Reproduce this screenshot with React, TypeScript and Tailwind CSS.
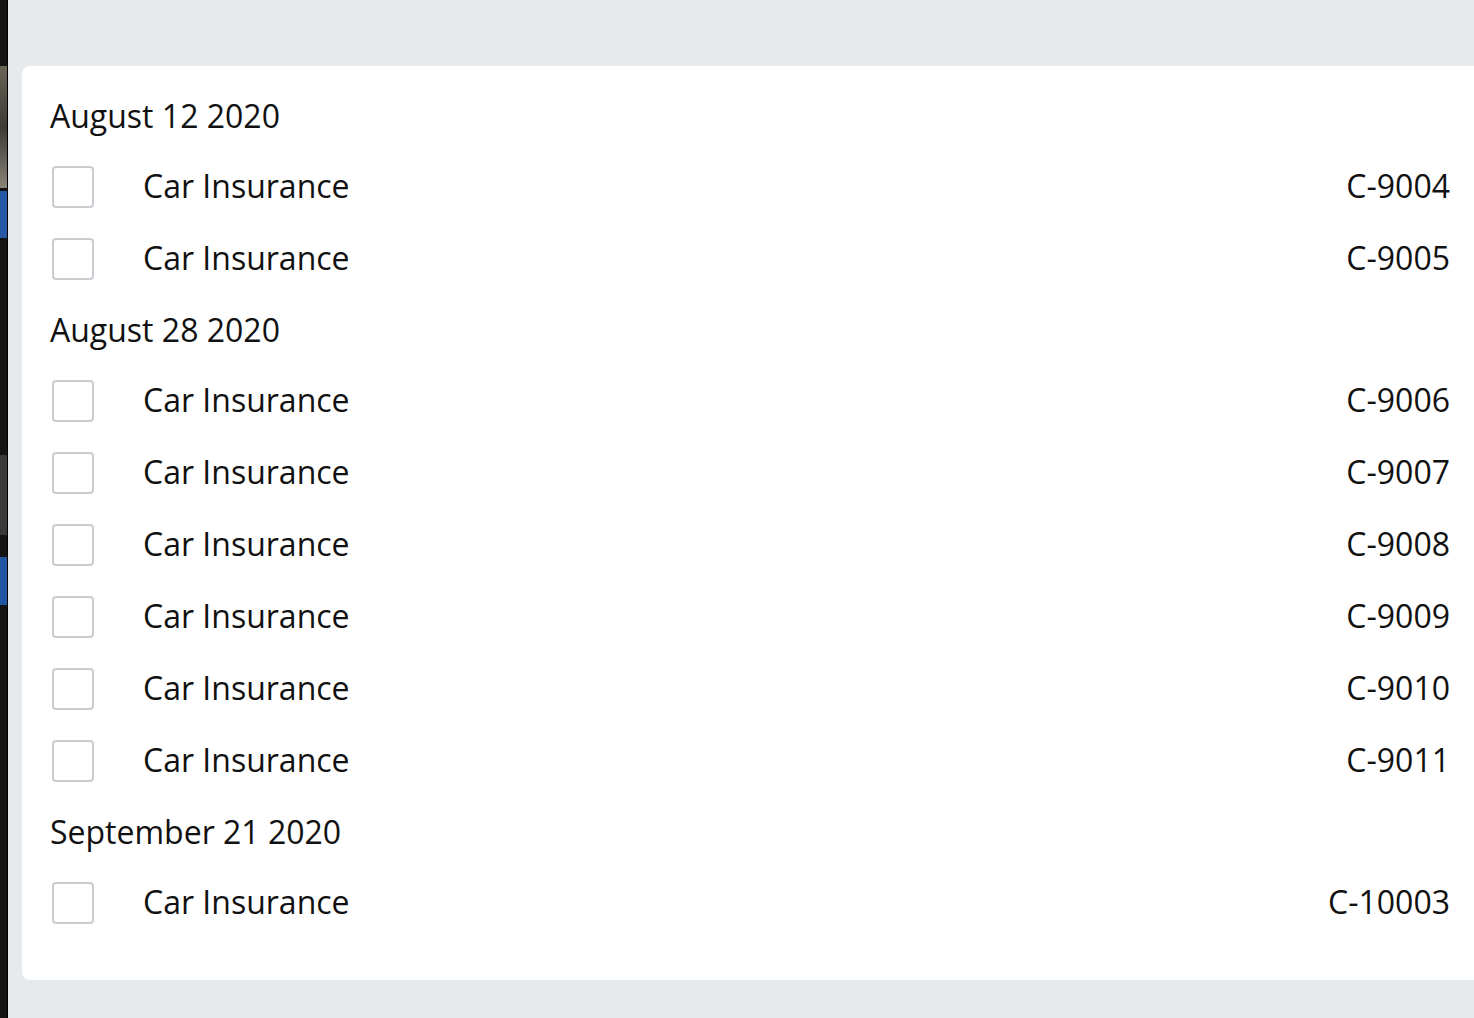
import React from 'react';

type Group = { date: string; items: string[] };

const GROUPS: Group[] = [
  { date: 'August 12 2020', items: ['C-9004', 'C-9005'] },
  { date: 'August 28 2020', items: ['C-9006', 'C-9007', 'C-9008', 'C-9009', 'C-9010', 'C-9011'] },
  { date: 'September 21 2020', items: ['C-10003'] },
];

function SideStrip() {
  // the edge of a sidebar peeking in from the left
  return (
    <div className="flex h-[1018px] w-[8px] shrink-0 flex-col border-r border-black bg-[#141414]">
      <div className="h-[66px]" />
      <div className="h-[122px] bg-gradient-to-b from-[#6b6558] via-[#3e3b36] to-[#8a8478]" />
      <div className="h-[3px]" />
      <div className="h-[47px] bg-[#2559a6]" />
      <div className="h-[217px]" />
      <div className="h-[80px] bg-[#3a3a3a]" />
      <div className="h-[22px]" />
      <div className="h-[48px] bg-[#2156a5]" />
    </div>
  );
}

function Row({ code }: { code: string }) {
  return (
    <div className="flex h-[72px] items-center pl-[2px]">
      <div className="h-[42px] w-[42px] shrink-0 rounded-[4px] border-2 border-[#c9cdd2] bg-white" />
      <span className="ml-[49px] flex-1 pb-[2px]">Car Insurance</span>
      <span className="pb-[2px]">{code}</span>
    </div>
  );
}

export default function App() {
  return (
    <div
      className="flex h-[1018px] w-[1474px] overflow-hidden bg-[#e7eaed] text-[32px] leading-none text-[#111]"
      style={{ fontFamily: '"Open Sans", "Noto Sans", sans-serif' }}
    >
      <SideStrip />
      <div className="flex-1 pl-[14px] pt-[66px]">
        <div className="h-[914px] rounded-l-[8px] bg-white pl-[28px] pr-[24px] pt-[15px]">
          {GROUPS.map(g => (
            <div key={g.date}>
              <div className="flex h-[70px] items-center">{g.date}</div>
              {g.items.map(c => (
                <Row key={c} code={c} />
              ))}
            </div>
          ))}
        </div>
      </div>
    </div>
  );
}
